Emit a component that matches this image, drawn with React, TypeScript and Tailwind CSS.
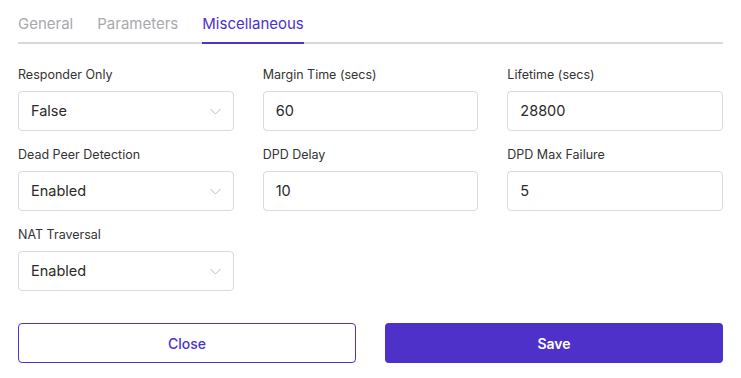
import React from "react"

const font = { fontFamily: "Inter, 'Noto Sans', sans-serif" }

type Field = { label: string; value: string; select?: boolean } | null

const fields: Field[] = [
	{ label: "Responder Only", value: "False", select: true },
	{ label: "Margin Time (secs)", value: "60" },
	{ label: "Lifetime (secs)", value: "28800" },
	{ label: "Dead Peer Detection", value: "Enabled", select: true },
	{ label: "DPD Delay", value: "10" },
	{ label: "DPD Max Failure", value: "5" },
	{ label: "NAT Traversal", value: "Enabled", select: true },
]

function Chevron() {
	return (
		<svg width="11" height="7" viewBox="0 0 11 7" fill="none" className="text-[#bdbdc2]">
			<path d="M0.5 1l5 5 5-5" stroke="currentColor" strokeWidth="1" />
		</svg>
	)
}

function FieldBox({ f }: { f: NonNullable<Field> }) {
	return (
		<div className="flex flex-col">
			<label className="text-[12.5px] leading-[18px] text-[#333] mb-[7px]">{f.label}</label>
			<div className="h-10 border border-[#d9d9de] rounded-[4px] pl-[12px] pr-[12px] flex items-center justify-between bg-white">
				<span className="text-[14.5px] text-[#2a2a2a]">{f.value}</span>
				{f.select && <Chevron />}
			</div>
		</div>
	)
}

export default function App() {
	return (
		<div className="w-[741px] h-[378px] bg-white px-[18px]" style={font}>
			<div className="flex gap-6 border-b-2 border-[#d9d9dc] pt-[14px]">
				<div className="pb-2 text-[15px] leading-5 text-[#a9a9ad]">General</div>
				<div className="pb-2 text-[15px] leading-5 text-[#a9a9ad]">Parameters</div>
				<div className="pb-2 -mb-[2px] border-b-2 border-[#4c33c9] text-[15px] leading-5 text-[#4c33c9]">
					Miscellaneous
				</div>
			</div>
			<div className="grid grid-cols-3 gap-x-[29px] gap-y-[15px] mt-[22px]">
				{fields.map((f, i) => (f ? <FieldBox key={i} f={f} /> : <div key={i} />))}
			</div>
			<div className="grid grid-cols-2 gap-x-[29px] mt-8">
				<button className="h-10 rounded-[4px] border border-[#4c33c9] text-[#4c33c9] text-[14px] font-medium bg-white">
					Close
				</button>
				<button className="h-10 rounded-[4px] bg-[#4d31c9] text-white text-[14px] font-semibold">
					Save
				</button>
			</div>
		</div>
	)
}
